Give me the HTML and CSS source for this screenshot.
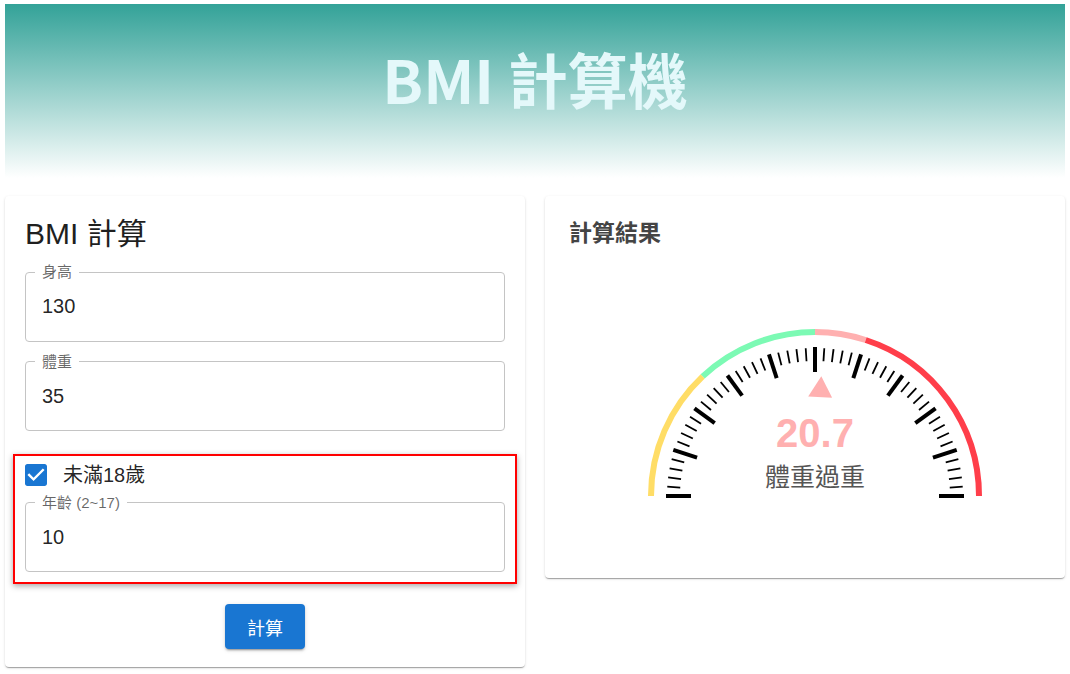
FILE: index.html
```html
<!DOCTYPE html>
<html lang="zh-Hant">
<head>
<meta charset="utf-8">
<title>BMI 計算機</title>
<link rel="stylesheet" href="styles.css">
</head>
<body>
<div class="page">
  <header class="hero">
    <h1 class="hero-title">BMI 計算機</h1>
  </header>
  <main class="grid">
    <section class="card card-form">
      <h2 class="form-title">BMI 計算</h2>
      <fieldset class="field field-height">
        <legend class="field-label">身高</legend>
        <input class="field-input" type="text" value="130">
      </fieldset>
      <fieldset class="field field-weight">
        <legend class="field-label">體重</legend>
        <input class="field-input" type="text" value="35">
      </fieldset>
      <div class="highlight">
        <label class="check-row">
          <span class="check-box">
            <svg class="check-icon" viewBox="3 3 18 18" width="22" height="22"><path class="check-fill" d="M19 3H5c-1.11 0-2 .9-2 2v14c0 1.1.89 2 2 2h14c1.11 0 2-.9 2-2V5c0-1.1-.89-2-2-2zm-9 14l-5-5 1.41-1.41L10 14.17l7.59-7.59L19 8l-9 9z"/></svg>
          </span>
          <span class="check-label">未滿18歲</span>
        </label>
        <fieldset class="field field-age">
          <legend class="field-label">年齡 (2~17)</legend>
          <input class="field-input" type="text" value="10">
        </fieldset>
      </div>
      <div class="actions">
        <button class="btn" type="button">計算</button>
      </div>
    </section>
    <section class="card card-result">
      <h2 class="result-title">計算結果</h2>
      <div class="gauge-wrap">
        <svg class="gauge" viewBox="0 0 360 185" width="360" height="185">
          <defs>
            <line id="tM" class="tick-major" x1="31" y1="176" x2="56" y2="176"/>
            <line id="tm" class="tick-minor" x1="32" y1="176" x2="45" y2="176"/>
          </defs>
          <path class="arc arc-yellow" d="M16 176 A164 164 0 0 1 67.7 56.4"/>
          <path class="arc arc-green" d="M67.7 56.4 A164 164 0 0 1 180 12"/>
          <path class="arc arc-pink" d="M180 12 A164 164 0 0 1 230.7 20"/>
          <path class="arc arc-red" d="M230.7 20 A164 164 0 0 1 344 176"/>
          <g class="ticks">
            <use href="#tM" transform="rotate(0 180 176)"/>
            <use href="#tm" transform="rotate(3.6 180 176)"/>
            <use href="#tm" transform="rotate(7.2 180 176)"/>
            <use href="#tm" transform="rotate(10.8 180 176)"/>
            <use href="#tm" transform="rotate(14.4 180 176)"/>
            <use href="#tM" transform="rotate(18 180 176)"/>
            <use href="#tm" transform="rotate(21.6 180 176)"/>
            <use href="#tm" transform="rotate(25.2 180 176)"/>
            <use href="#tm" transform="rotate(28.8 180 176)"/>
            <use href="#tm" transform="rotate(32.4 180 176)"/>
            <use href="#tM" transform="rotate(36 180 176)"/>
            <use href="#tm" transform="rotate(39.6 180 176)"/>
            <use href="#tm" transform="rotate(43.2 180 176)"/>
            <use href="#tm" transform="rotate(46.8 180 176)"/>
            <use href="#tm" transform="rotate(50.4 180 176)"/>
            <use href="#tM" transform="rotate(54 180 176)"/>
            <use href="#tm" transform="rotate(57.6 180 176)"/>
            <use href="#tm" transform="rotate(61.2 180 176)"/>
            <use href="#tm" transform="rotate(64.8 180 176)"/>
            <use href="#tm" transform="rotate(68.4 180 176)"/>
            <use href="#tM" transform="rotate(72 180 176)"/>
            <use href="#tm" transform="rotate(75.6 180 176)"/>
            <use href="#tm" transform="rotate(79.2 180 176)"/>
            <use href="#tm" transform="rotate(82.8 180 176)"/>
            <use href="#tm" transform="rotate(86.4 180 176)"/>
            <use href="#tM" transform="rotate(90 180 176)"/>
            <use href="#tm" transform="rotate(93.6 180 176)"/>
            <use href="#tm" transform="rotate(97.2 180 176)"/>
            <use href="#tm" transform="rotate(100.8 180 176)"/>
            <use href="#tm" transform="rotate(104.4 180 176)"/>
            <use href="#tM" transform="rotate(108 180 176)"/>
            <use href="#tm" transform="rotate(111.6 180 176)"/>
            <use href="#tm" transform="rotate(115.2 180 176)"/>
            <use href="#tm" transform="rotate(118.8 180 176)"/>
            <use href="#tm" transform="rotate(122.4 180 176)"/>
            <use href="#tM" transform="rotate(126 180 176)"/>
            <use href="#tm" transform="rotate(129.6 180 176)"/>
            <use href="#tm" transform="rotate(133.2 180 176)"/>
            <use href="#tm" transform="rotate(136.8 180 176)"/>
            <use href="#tm" transform="rotate(140.4 180 176)"/>
            <use href="#tM" transform="rotate(144 180 176)"/>
            <use href="#tm" transform="rotate(147.6 180 176)"/>
            <use href="#tm" transform="rotate(151.2 180 176)"/>
            <use href="#tm" transform="rotate(154.8 180 176)"/>
            <use href="#tm" transform="rotate(158.4 180 176)"/>
            <use href="#tM" transform="rotate(162 180 176)"/>
            <use href="#tm" transform="rotate(165.6 180 176)"/>
            <use href="#tm" transform="rotate(169.2 180 176)"/>
            <use href="#tm" transform="rotate(172.8 180 176)"/>
            <use href="#tm" transform="rotate(176.4 180 176)"/>
            <use href="#tM" transform="rotate(180 180 176)"/>
          </g>
          <polygon class="pointer" points="180,56 168,77 192,77" transform="rotate(3 180 176)"/>
          <text class="gauge-value" x="180" y="127">20.7</text>
          <text class="gauge-status" x="180" y="166">體重過重</text>
        </svg>
      </div>
    </section>
  </main>
</div>
</body>
</html>
```
FILE: styles.css
```css
* { box-sizing: border-box; }

html, body {
  margin: 0;
  background: #ffffff;
}

body {
  font-family: "Liberation Sans", "Noto Sans CJK TC", sans-serif;
  color: rgba(0, 0, 0, 0.87);
}

.page {
  padding: 4px 5px;
}

.hero {
  height: 174px;
  display: flex;
  align-items: center;
  justify-content: center;
  padding-bottom: 26px;
  background: linear-gradient(180deg, #33a298 0%, #ffffff 100%);
}

.hero-title {
  margin: 0;
  font-family: "Noto Sans CJK TC", sans-serif;
  font-weight: 700;
  font-size: 60px;
  line-height: 60px;
  color: #e4f8fa;
}

.grid {
  margin-top: 18px;
  display: grid;
  grid-template-columns: 1fr 1fr;
  column-gap: 20px;
  align-items: start;
}

.card {
  background: #ffffff;
  border-radius: 4px;
  box-shadow: 0 2px 1px -1px rgba(0, 0, 0, 0.2), 0 1px 1px 0 rgba(0, 0, 0, 0.14), 0 1px 3px 0 rgba(0, 0, 0, 0.12);
}

.card-form {
  padding: 20px 20px 18px;
}

.form-title {
  margin: 0;
  font-weight: 400;
  font-size: 30px;
  line-height: 36px;
  color: #1f1f1f;
}

.field {
  margin: 14px 0 0;
  padding: 0 14px;
  border: 1px solid #c4c4c4;
  border-radius: 4px;
  min-width: 0;
}

.field-height { margin-top: 13px; }
.field-weight { margin-top: 13px; }
.field-age { margin-top: 9.5px; }

.field-label {
  margin-left: -5px;
  padding: 0 7px;
  font-size: 15px;
  line-height: 14px;
  height: 14px;
  color: rgba(0, 0, 0, 0.6);
}

.field-input {
  display: block;
  width: 100%;
  border: 0;
  outline: 0;
  background: transparent;
  padding: 16.5px 2px 23px;
  margin: 0;
  font-family: inherit;
  font-size: 20px;
  line-height: 22px;
  height: 61.5px;
  color: rgba(0, 0, 0, 0.87);
}

.highlight {
  margin: 23px -12px 0;
  padding: 8px 10px 10px;
  border: 2px solid #ff0000;
  box-shadow: 0 2px 6px rgba(0, 0, 0, 0.35);
}

.check-row {
  display: flex;
  align-items: center;
  gap: 16px;
  height: 22px;
}

.check-box {
  display: block;
  width: 22px;
  height: 22px;
}

.check-icon { display: block; }

.check-fill { fill: #1976d2; }

.check-label {
  font-size: 20px;
  line-height: 22px;
  color: rgba(0, 0, 0, 0.87);
}

.actions {
  margin-top: 20px;
  display: flex;
  justify-content: center;
}

.btn {
  width: 80px;
  height: 45px;
  border: 0;
  border-radius: 4px;
  background: #1976d2;
  color: #ffffff;
  font-family: inherit;
  font-size: 18px;
  box-shadow: 0 3px 1px -2px rgba(0, 0, 0, 0.2), 0 2px 2px 0 rgba(0, 0, 0, 0.14), 0 1px 5px 0 rgba(0, 0, 0, 0.12);
}

.card-result {
  padding: 24px;
}

.result-title {
  margin: 0;
  font-weight: 700;
  font-size: 23px;
  line-height: 26px;
  color: #444444;
}

.gauge-wrap {
  display: flex;
  justify-content: center;
  padding: 74px 0 49px 20px;
}

.gauge { display: block; }

.arc {
  fill: none;
  stroke-width: 6;
}

.arc-yellow { stroke: #ffdd66; }
.arc-green { stroke: #7cfab4; }
.arc-pink { stroke: #ffb0b0; }
.arc-red { stroke: #ff3e4a; }

.tick-major {
  stroke: #000000;
  stroke-width: 4;
}

.tick-minor {
  stroke: #000000;
  stroke-width: 1.8;
}

.pointer { fill: #ffb0b0; }

.gauge-value {
  font-family: "Liberation Sans", sans-serif;
  font-weight: 700;
  font-size: 40px;
  fill: #ffb0b0;
  text-anchor: middle;
}

.gauge-status {
  font-family: "Liberation Sans", "Noto Sans CJK TC", sans-serif;
  font-size: 25px;
  fill: #555555;
  text-anchor: middle;
}
```
